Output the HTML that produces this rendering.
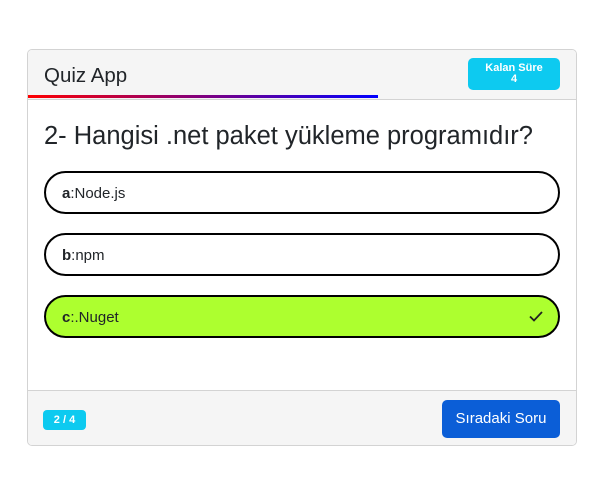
<!DOCTYPE html><html><head><style>
*{box-sizing:border-box;margin:0;padding:0}
body{width:616px;height:501px;background:#fff;font-family:"Liberation Sans",sans-serif;color:#212529;position:relative}
.card{position:absolute;left:27px;top:49px;width:550px;height:397px;border:1px solid #d3d3d3;border-radius:5px;overflow:hidden}
.hdr{position:absolute;left:0;top:0;width:100%;height:50px;background:#f5f5f5;border-bottom:1px solid #d3d3d3}
.hdr .t{position:absolute;left:16px;top:14px;font-size:20.5px}
.bar{position:absolute;left:0;top:45px;width:350px;height:3px;background:linear-gradient(90deg,#f00,#00f)}
.timer{position:absolute;left:440px;top:8px;width:92px;height:32px;background:#0dcaf0;border-radius:5px;color:#fff;font-weight:bold;font-size:11px;text-align:center;line-height:11px;padding-top:5px}
.q{position:absolute;left:16px;top:72px;font-size:25.5px}
.opt{position:absolute;left:16px;width:516px;height:43px;border:2px solid #000;border-radius:22px;font-size:15px;padding:12px 0 0 16px}
.ok{background:#adff2f}
.chk{position:absolute;right:14px;top:11px}
.ftr{position:absolute;left:0;top:340px;width:100%;height:57px;background:#f5f5f5;border-top:1px solid #d3d3d3}
.pg{position:absolute;left:15px;top:19px;width:43px;height:20px;background:#0dcaf0;border-radius:4px;color:#fff;font-weight:bold;font-size:11px;text-align:center;line-height:20px}
.btn{position:absolute;left:414px;top:9px;width:118px;height:38px;background:#0b5ed7;border-radius:5px;color:#fff;font-size:15px;text-align:center;line-height:38px}
</style></head><body>
<div class="card">
<div class="hdr"><div class="t">Quiz App</div><div class="bar"></div><div class="timer">Kalan Süre<br>4</div></div>
<div class="q">2- Hangisi .net paket yükleme programıdır?</div>
<div class="opt" style="top:121px"><b>a</b>:Node.js</div>
<div class="opt" style="top:183px"><b>b</b>:npm</div>
<div class="opt ok" style="top:245px"><b>c</b>:.Nuget<svg class="chk" width="16" height="16" viewBox="0 0 16 16"><path d="M2 8.5l4 4L14 4" fill="none" stroke="#222" stroke-width="1.8"/></svg></div>
<div class="ftr"><div class="pg">2 / 4</div><div class="btn">Sıradaki Soru</div></div>
</div>
</body></html>
